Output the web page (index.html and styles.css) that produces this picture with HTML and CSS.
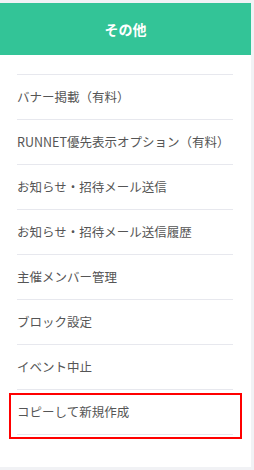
FILE: index.html
```html
<html>
<head>
    <link rel="stylesheet" href="styles.css">
</head>
<body>
    <section class="panel">
        <h2 class="panel-title">その他</h2>
        <ul class="menu">
            <li class="menu-item">バナー掲載（有料）</li>
            <li class="menu-item">RUNNET優先表示オプション（有料）</li>
            <li class="menu-item">お知らせ・招待メール送信</li>
            <li class="menu-item">お知らせ・招待メール送信履歴</li>
            <li class="menu-item">主催メンバー管理</li>
            <li class="menu-item">ブロック設定</li>
            <li class="menu-item">イベント中止</li>
            <li class="menu-item selected">コピーして新規作成</li>
        </ul>
    </section>
</body>
</html>
```

FILE: styles.css
```css
body {margin:0; background:#f1f2f5; font-family: "Noto Sans CJK JP", "Noto Sans", sans-serif;}
.panel {
    width: 251px;
    margin-top: 3px;
    height: 464px;
    background: #fff;
    box-sizing: border-box;
}
.panel-title {
    margin: 0;
    height: 52px;
    line-height: 52px;
    background: #33c497;
    color: #fff;
    font-size: 14px;
    font-weight: bold;
    text-align: center;
}
.menu {
    list-style: none;
    margin: 19px 18px 0 17px;
    padding: 0;
}
.menu-item {
    height: 44px;
    line-height: 44px;
    border-top: 1px solid #e7e8ee;
    font-size: 12.5px;
    color: #555;
    white-space: nowrap;
    position: relative;
}
.menu-item:last-child {border-bottom: 1px solid #e7e8ee;}
.menu-item.selected::after {
    content: "";
    position: absolute;
    left: -8px;
    top: 3px;
    width: 233px;
    height: 46px;
    border: 2px solid #f00;
    box-sizing: border-box;
}
```
